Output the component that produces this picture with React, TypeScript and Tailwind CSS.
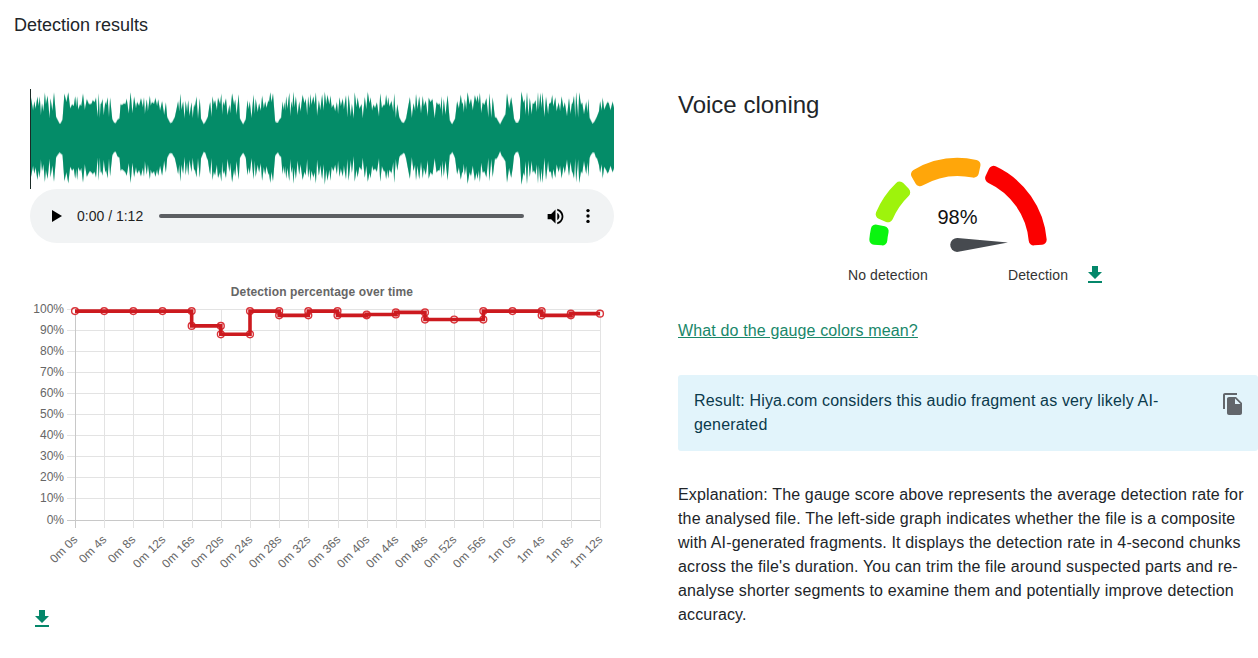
import React from 'react';

const font = { fontFamily: '"Liberation Sans", Arial, sans-serif' };

// waveform is faked from a seeded generator, dips are where the reference has them
const dips = [60, 115, 171, 204, 243, 277, 403, 452, 500, 517, 593];

const buildWave = (grow: number) => {
  let seed = 4242;
  const rand = () => {
    seed = (seed + 0x6d2b79f5) | 0;
    let t = Math.imul(seed ^ (seed >>> 15), 1 | seed);
    t = (t + Math.imul(t ^ (t >>> 7), 61 | t)) ^ t;
    return ((t ^ (t >>> 14)) >>> 0) / 4294967296;
  };
  const top: string[] = [];
  const bottom: string[] = [];
  let x = 31;
  let peak = true;
  while (x < 614) {
    // peaks and valleys take turns, so the edge stays spiky
    let amp = peak ? 33 + 13 * rand() : 19 + 17 * rand();
    for (const d of dips) {
      const dist = Math.abs(x - d);
      if (dist < 4) amp = Math.min(amp, 13 + dist * 2);
    }
    if (x > 608) amp = Math.min(amp, 36);
    amp += grow;
    top.push(`${x.toFixed(1)} ${(138 - amp).toFixed(1)}`);
    bottom.unshift(`${x.toFixed(1)} ${(138 + (amp + rand() * 3 - 1.5) * 0.98).toFixed(1)}`);
    x += 0.8 + rand() * 1.4;
    peak = !peak;
  }
  top.push(`614 ${138 - 30 - grow}`);
  bottom.unshift(`614 ${138 + 30 + grow}`);
  return `M30 ${138 - 25}L${top.join('L')}L${bottom.join('L')}L30 ${138 + 25}Z`;
};

const Waveform: React.FC = () => (
  <svg viewBox="30 89 584 100" className="block w-[584px] h-[100px]">
    <path d={buildWave(1.2)} fill="#048c68" opacity="0.35" />
    <path d={buildWave(0)} fill="#048c68" />
    <rect x="30" y="89" width="1" height="100" fill="#1b2a26" />
  </svg>
);

const AudioBar: React.FC = () => (
  <div className="flex items-center h-[54px] w-[584px] rounded-[27px] bg-[#f1f3f4] text-[#1f1f1f]">
    <svg viewBox="0 0 10 12" className="w-[10px] h-[12px] ml-[22px]">
      <path d="M0 0v12l10-6z" fill="#000" />
    </svg>
    <span className="ml-[15px] w-[66px] text-[14px] whitespace-nowrap">0:00 / 1:12</span>
    <div className="ml-[16px] w-[365px] h-[4px] rounded-full bg-[#5c5e62]" />
    <svg viewBox="0 0 24 24" className="w-[21px] h-[21px] ml-[21px]">
      <path
        d="M3 9v6h4l5 5V4L7 9H3zm13.5 3c0-1.77-1.02-3.29-2.5-4.03v8.05c1.48-.73 2.5-2.25 2.5-4.02zM14 3.23v2.06c2.89.86 5 3.54 5 6.71s-2.11 5.85-5 6.71v2.06c4.01-.91 7-4.49 7-8.77s-2.99-7.86-7-8.77z"
        fill="#000"
      />
    </svg>
    <svg viewBox="0 0 4 16" className="w-[4px] h-[16px] ml-[20px]">
      <circle cx="2" cy="2.6" r="1.7" fill="#000" />
      <circle cx="2" cy="8" r="1.7" fill="#000" />
      <circle cx="2" cy="13.4" r="1.7" fill="#000" />
    </svg>
  </div>
);

const xLabels = [
  '0m 0s', '0m 4s', '0m 8s', '0m 12s', '0m 16s', '0m 20s', '0m 24s', '0m 28s', '0m 32s', '0m 36s',
  '0m 40s', '0m 44s', '0m 48s', '0m 52s', '0m 56s', '1m 0s', '1m 4s', '1m 8s', '1m 12s',
];

// value held from tick i to tick i+1
const steps = [99, 99, 99, 99, 92, 88, 99, 97, 99, 97, 97.4, 98.4, 95, 95, 99, 99, 97, 97.8];

const px = (i: number) => 75 + i * (525 / 18);
const py = (v: number) => 520 - v * 2.11;

const Chart: React.FC = () => {
  let line = `M${px(0)} ${py(steps[0])}`;
  const dots: [number, number][] = [[px(0), py(steps[0])]];
  steps.forEach((v, i) => {
    line += `L${px(i + 1)} ${py(v)}`;
    dots.push([px(i + 1), py(v)]);
    const next = steps[i + 1];
    if (next !== undefined) {
      line += `L${px(i + 1)} ${py(next)}`;
      if (next !== v) dots.push([px(i + 1), py(next)]);
    }
  });

  return (
    <svg viewBox="30 280 584 300" className="block w-[584px] h-[300px]">
      <text x="322" y="296" textAnchor="middle" fontSize="12" fontWeight="700" fill="#666" letterSpacing="0.12">
        Detection percentage over time
      </text>
      {Array.from({ length: 11 }).map((_, i) => {
        const y = Math.floor(py(i * 10)) + 0.5;
        return (
          <g key={i}>
            <line x1="67" x2="600" y1={y} y2={y} stroke={i === 0 ? '#c8c8c8' : '#e3e3e3'} />
            <text x="64" y={y + 3.5} textAnchor="end" fontSize="12" fill="#666">
              {i * 10}%
            </text>
          </g>
        );
      })}
      {xLabels.map((label, i) => {
        const x = Math.round(px(i)) + 0.5;
        return (
          <g key={label}>
            <line x1={x} x2={x} y1="309" y2="528" stroke={i === 0 ? '#c8c8c8' : '#e3e3e3'} />
            <text
              transform={`translate(${x + 3} 540) rotate(-45)`}
              textAnchor="end"
              fontSize="12"
              letterSpacing="0.2"
              fill="#666"
            >
              {label}
            </text>
          </g>
        );
      })}
      {dots.map(([x, y], i) => (
        <circle key={i} cx={x} cy={y} r="3.4" fill="rgba(255,255,255,0.4)" stroke="#d9343a" strokeWidth="1.4" />
      ))}
      <path d={line} fill="none" stroke="#cc1a1f" strokeWidth="3.6" />
    </svg>
  );
};

const GAUGE_X = 958;
const GAUGE_Y = 247;

// annular sector drawn 5px short on every side, then stroked round for the soft corners
const sector = (from: number, to: number) => {
  const inner = 76;
  const outer = 84;
  const p = (r: number, deg: number) => {
    const a = (deg * Math.PI) / 180;
    return `${(GAUGE_X - r * Math.cos(a)).toFixed(2)} ${(GAUGE_Y - r * Math.sin(a)).toFixed(2)}`;
  };
  return `M${p(inner, from)}L${p(outer, from)}A${outer} ${outer} 0 0 1 ${p(outer, to)}L${p(inner, to)}A${inner} ${inner} 0 0 0 ${p(inner, from)}Z`;
};

const segments = [
  { from: 5, to: 12, color: '#0af50f' },
  { from: 23, to: 46, color: '#9ef30c' },
  { from: 60, to: 102, color: '#ffa60a' },
  { from: 115, to: 175, color: '#fb0000' },
];

const Gauge: React.FC = () => (
  <svg viewBox="858 153 200 100" className="block w-[200px] h-[100px] ml-[180px]">
    {segments.map(s => (
      <path
        key={s.color}
        d={sector(s.from, s.to)}
        fill={s.color}
        stroke={s.color}
        strokeWidth="10"
        strokeLinejoin="round"
      />
    ))}
    <text x="957.5" y="224" textAnchor="middle" fontSize="20" fill="#111">
      98%
    </text>
    <path d="M1008 242.4L957.5 238a7 7 0 0 0-.5 14z" fill="#464a4f" />
  </svg>
);

const DownloadIcon: React.FC = () => (
  <svg viewBox="0 0 24 24" className="w-6 h-6">
    <path d="M19 9h-4V3H9v6H5l7 7 7-7zM5 18v2h14v-2H5z" fill="#04876a" />
  </svg>
);

const CopyIcon: React.FC = () => (
  <svg viewBox="0 0 24 24" className="w-6 h-6 mt-[3px] ml-[17px] shrink-0">
    <path
      d="M16 1H4c-1.1 0-2 .9-2 2v14h2V3h12V1zm-1 4l6 6v10c0 1.1-.9 2-2 2H7.99C6.89 23 6 22.1 6 21l.01-14c0-1.1.89-2 1.99-2h7zm-1 7h5.5L14 6.5V12z"
      fill="#62666b"
    />
  </svg>
);

const App: React.FC = () => {
  return (
    <div className="w-[1258px] h-[658px] overflow-hidden bg-white text-[#212529]" style={font}>
      <div className="h-[89px] pl-[14px] pt-[12px] text-[18px] leading-[27px]">Detection results</div>

      <div className="flex pl-[30px] gap-[64px]">
        <div className="w-[584px] shrink-0">
          <Waveform />
          <AudioBar />
          <div className="mt-[37px]">
            <Chart />
          </div>
          <div className="mt-[27px]">
            <DownloadIcon />
          </div>
        </div>

        <div className="w-[580px] shrink-0">
          <h2 className="text-[24px] leading-[32px]">Voice cloning</h2>
          <div className="mt-[32px]">
            <Gauge />
          </div>
          <div className="mt-[10px] flex items-center h-6 text-[14px] tracking-[0.1px] text-[#333]">
            <span className="ml-[170px] w-[160px]">No detection</span>
            <span className="w-[75px]">Detection</span>
            <DownloadIcon />
          </div>
          <a href="#" className="block mt-[32px] text-[16px] tracking-[0.14px] leading-6 text-[#19876a] underline">
            What do the gauge colors mean?
          </a>
          <div className="mt-[32px] flex bg-[#e2f4fb] rounded-[3px] pl-4 pt-[14px] pb-[14px] text-[16px] tracking-[0.155px] leading-6 text-[#0b3a4c]">
            <div className="w-[510px]">
              Result: Hiya.com considers this audio fragment as very likely AI-generated
            </div>
            <CopyIcon />
          </div>
          <p className="mt-[32px] text-[16px] tracking-[0.155px] leading-6">
            Explanation: The gauge score above represents the average detection rate for the analysed
            file. The left-side graph indicates whether the file is a composite with AI-generated
            fragments. It displays the detection rate in 4-second chunks across the file's duration.
            You can trim the file around suspected parts and re-analyse shorter segments to examine
            them and potentially improve detection accuracy.
          </p>
        </div>
      </div>
    </div>
  );
};

export default App;
